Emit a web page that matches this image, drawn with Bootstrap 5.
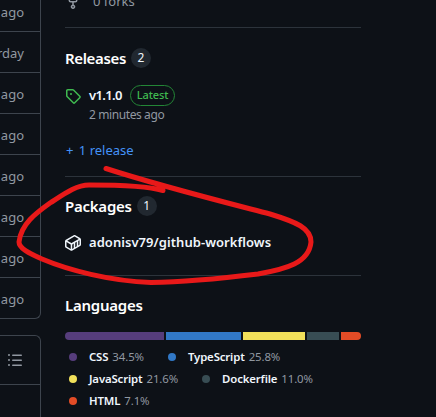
<!DOCTYPE html>
<html lang="en" data-bs-theme="dark">
<head>
<meta charset="utf-8">
<meta name="viewport" content="width=device-width, initial-scale=1">
<title>Repository sidebar</title>
<link href="https://cdn.jsdelivr.net/npm/bootstrap@5.3.0/dist/css/bootstrap.min.css" rel="stylesheet">
<style>
body{width:436px;height:417px;background:#0d1117;color:#f0f6fc;font-family:"Noto Sans","Open Sans",sans-serif;font-size:13px;line-height:20px;white-space:nowrap}
svg{fill:currentColor;flex:none;display:block}
.files{width:41px;flex:none}
.panel{border:1px solid #3d444d;border-left:0}
.log{height:319px;border-top:0;border-bottom-right-radius:6px}
.log-row{height:41px;flex:none;padding:2px 16px 0 0;color:#9198a1;border-bottom:1px solid #3d444d}
.log-row:first-child{height:32px;padding-top:0;padding-bottom:7px}
.log-row:last-child{border-bottom:0;height:40px}
.readme{height:90px;margin-top:16px;border-bottom:0;border-top-right-radius:6px}
.readme-bar{height:49px;padding-right:17px;color:#9198a1;border-bottom:1px solid #3d444d}
.side{width:296px;margin-left:24px}
.side section{border-bottom:1px solid #2c333b}
.side section:last-child{border-bottom:0}
.forks{height:28px}
.forks-row{height:20px;margin-top:-8px}
.forks-row span{margin-top:-2px}
.releases{height:149px}
.packages{height:99px}
.gray{color:#9198a1}
.heading{height:42px;padding-top:18px}
.packages .heading{height:41px;padding-top:17px}
.languages .heading{height:42px;padding-top:17px}
h2{font-size:15px;font-weight:600;line-height:24px;margin:0;letter-spacing:-.25px}
.releases h2{margin-top:-1px;letter-spacing:-.35px}
.counter{width:20px;height:20px;border-radius:50%;background:#212830;font-size:12px;margin-left:5px}
.strong{font-weight:600}
.version{height:22px;margin-top:14px}
.ver{width:41px;letter-spacing:-.65px;margin-top:-1px}
.latest{width:45px;height:21px;border:1px solid #238636;border-radius:11px;color:#3fb950;font-size:11px;font-weight:500;line-height:18px;letter-spacing:-.1px}
.tag{color:#3fb950;margin-top:2px}
.ago{font-size:12px;line-height:18px;margin-left:24px;letter-spacing:-.4px}
.more{color:#4493f8;margin-top:16px;padding-left:1px}
.more span{margin-left:2px}
.package{height:20px;margin-top:15px}
.package span{margin-top:-2px;letter-spacing:.05px}
.bar{height:8px;gap:2px;border-radius:6px;margin-top:14px}
.css{background:#563d7c}.ts{background:#3178c6}.js{background:#f1e05a}.docker{background:#384d54}.html{background:#e34c26}
.langs{font-size:11.4px;line-height:22px;margin-top:6px}
.lang-row{gap:20px}
.lang{height:22px}
.lang i{width:8px;height:8px;border-radius:50%;margin:0 12px 0 4px}
.lang b{font-weight:600;letter-spacing:-.15px;margin-right:4px}
.lang span{letter-spacing:-.1px}
.scribble{left:0;top:0;fill:none;stroke:#e81919;stroke-width:5;stroke-linecap:round;stroke-linejoin:round;pointer-events:none}
</style>
</head>
<body class="position-relative overflow-hidden">
<div class="d-flex h-100">
  <div class="files overflow-hidden">
    <div class="panel log">
      <div class="log-row d-flex align-items-center justify-content-end">ago</div>
      <div class="log-row d-flex align-items-center justify-content-end">yesterday</div>
      <div class="log-row d-flex align-items-center justify-content-end">ago</div>
      <div class="log-row d-flex align-items-center justify-content-end">ago</div>
      <div class="log-row d-flex align-items-center justify-content-end">ago</div>
      <div class="log-row d-flex align-items-center justify-content-end">ago</div>
      <div class="log-row d-flex align-items-center justify-content-end">ago</div>
      <div class="log-row d-flex align-items-center justify-content-end">ago</div>
    </div>
    <div class="panel readme">
      <div class="readme-bar d-flex align-items-center justify-content-end">
        <svg width="16" height="16" viewBox="0 0 16 16"><path d="M5.75 2.5h8.5a.75.75 0 0 1 0 1.5h-8.5a.75.75 0 0 1 0-1.5Zm0 5h8.5a.75.75 0 0 1 0 1.5h-8.5a.75.75 0 0 1 0-1.5Zm0 5h8.5a.75.75 0 0 1 0 1.5h-8.5a.75.75 0 0 1 0-1.5ZM2 14a1 1 0 1 1 0-2 1 1 0 0 1 0 2Zm1-6a1 1 0 1 1-2 0 1 1 0 0 1 2 0ZM2 4a1 1 0 1 1 0-2 1 1 0 0 1 0 2Z"/></svg>
      </div>
    </div>
  </div>
  <div class="side">
    <section class="forks gray d-flex align-items-start">
      <div class="forks-row d-flex align-items-center">
        <svg class="me-2" width="16" height="16" viewBox="0 0 16 16"><path d="M5 5.372v.878c0 .414.336.75.75.75h4.5a.75.75 0 0 0 .75-.75v-.878a2.25 2.25 0 1 1 1.5 0v.878a2.25 2.25 0 0 1-2.25 2.25h-1.5v2.128a2.251 2.251 0 1 1-1.5 0V8.5h-1.5A2.25 2.25 0 0 1 3.5 6.25v-.878a2.25 2.25 0 1 1 1.5 0ZM5 3.25a.75.75 0 1 0-1.5 0 .75.75 0 0 0 1.5 0Zm6.75.75a.75.75 0 1 0 0-1.5.75.75 0 0 0 0 1.5Zm-3 8.75a.75.75 0 1 0-1.5 0 .75.75 0 0 0 1.5 0Z"/></svg>
        <span class="ms-1">0 forks</span>
      </div>
    </section>
    <section class="releases">
      <div class="heading d-flex align-items-center">
        <h2>Releases</h2><span class="counter d-flex align-items-center justify-content-center">2</span>
      </div>
      <div class="version d-flex align-items-center">
        <svg class="tag me-2" width="16" height="16" viewBox="0 0 16 16"><path d="M1 7.775V2.75C1 1.784 1.784 1 2.75 1h5.025c.464 0 .91.184 1.238.513l6.25 6.25a1.75 1.75 0 0 1 0 2.474l-5.026 5.026a1.75 1.75 0 0 1-2.474 0l-6.25-6.25A1.752 1.752 0 0 1 1 7.775Zm1.5 0c0 .066.026.13.073.177l6.25 6.25a.25.25 0 0 0 .354 0l5.025-5.025a.25.25 0 0 0 0-.354l-6.25-6.25a.25.25 0 0 0-.177-.073H2.75a.25.25 0 0 0-.25.25ZM6 5a1 1 0 1 1 0 2 1 1 0 0 1 0-2Z"/></svg>
        <span class="strong ver">v1.1.0</span><span class="latest text-center">Latest</span>
      </div>
      <div class="gray ago">2 minutes ago</div>
      <div class="more">+ <span>1 release</span></div>
    </section>
    <section class="packages">
      <div class="heading d-flex align-items-center">
        <h2>Packages</h2><span class="counter d-flex align-items-center justify-content-center">1</span>
      </div>
      <div class="package d-flex align-items-center">
        <svg class="me-2" width="16" height="16" viewBox="0 0 16 16"><path d="m10.41.24 4.711 2.774c.544.316.878.897.879 1.526v5.01a1.77 1.77 0 0 1-.88 1.53l-7.753 4.521-.002.001a1.769 1.769 0 0 1-1.774 0H5.59L.873 12.85A1.761 1.761 0 0 1 0 11.327V6.292c0-.304.078-.598.22-.855l.004-.005.01-.019c.15-.262.369-.486.64-.643L8.641.239a1.752 1.752 0 0 1 1.765 0l.002.001ZM9.397 1.534l-7.17 4.182 4.116 2.388a.27.27 0 0 0 .269 0l7.152-4.148-4.115-2.422a.252.252 0 0 0-.252 0Zm-7.768 10.02 4.1 2.393V9.474a1.807 1.807 0 0 1-.138-.072L1.5 7.029v4.298c0 .095.05.181.129.227Zm8.6.642 1.521-.887v-4.45l-1.521.882ZM7.365 9.402h.001c-.044.026-.09.049-.136.071v4.472l1.5-.875V8.61Zm5.885 1.032 1.115-.65h.002a.267.267 0 0 0 .133-.232V5.264l-1.25.725Z"/></svg>
        <span class="strong">adonisv79/github-workflows</span>
      </div>
    </section>
    <section class="languages">
      <div class="heading"><h2>Languages</h2></div>
      <div class="bar d-flex overflow-hidden">
        <div class="css" style="width:99px"></div><div class="ts" style="width:75px"></div><div class="js" style="width:62px"></div><div class="docker" style="width:32px"></div><div class="html" style="width:20px"></div>
      </div>
      <div class="langs">
        <div class="lang-row d-flex">
          <div class="lang d-flex align-items-center"><i class="css"></i><b>CSS</b><span class="gray">34.5%</span></div>
          <div class="lang d-flex align-items-center"><i class="ts"></i><b>TypeScript</b><span class="gray">25.8%</span></div>
        </div>
        <div class="lang-row d-flex">
          <div class="lang d-flex align-items-center"><i class="js"></i><b>JavaScript</b><span class="gray">21.6%</span></div>
          <div class="lang d-flex align-items-center"><i class="docker"></i><b>Dockerfile</b><span class="gray">11.0%</span></div>
        </div>
        <div class="lang d-flex align-items-center"><i class="html"></i><b>HTML</b><span class="gray">7.1%</span></div>
      </div>
    </section>
  </div>
</div>
<svg class="scribble position-absolute" width="436" height="417" viewBox="0 0 436 417"><path d="M106 168.500C160 186 220 201 270 214C296 222 311 228 311 242C309 263 286 269 258 274C225 278 185 282 151 282.500C110 281 68 270 42 259C28 253 19 248 19 242C21 224 36 213 50 203C64 194 76 185 89 185C115 185 148 186 163 190.500"/></svg>
<script src="https://cdn.jsdelivr.net/npm/bootstrap@5.3.0/dist/js/bootstrap.bundle.min.js"></script>
</body>
</html>
